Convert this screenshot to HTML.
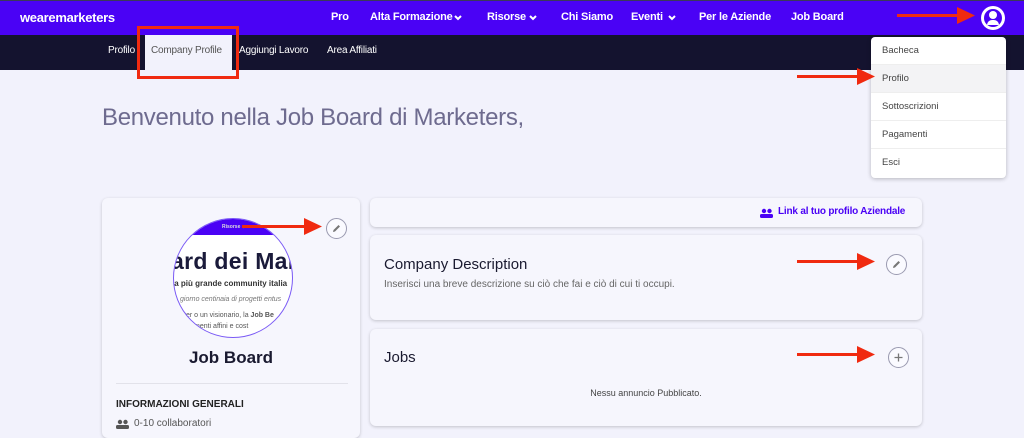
<!DOCTYPE html>
<html><head><meta charset="utf-8"><style>
*{box-sizing:border-box;margin:0;padding:0}
body{width:1024px;height:431px;overflow:hidden;background:#f2f2fc;font-family:"Liberation Sans",sans-serif;position:relative}
.a{position:absolute}
.top{left:0;top:0;width:1024px;height:35px;background:#4a02f5;border-top:1px solid #3a3a5a}
.sub{left:0;top:35px;width:1024px;height:35px;background:#14132f}
.nav{color:#fff;font-weight:bold;font-size:11px;letter-spacing:-0.2px;top:11px;white-space:nowrap}
.subt{color:#fff;font-size:10px;top:45px;letter-spacing:-0.2px;white-space:nowrap}
.card{background:#f6f6fd;border-radius:6px;box-shadow:0 1px 3px rgba(0,0,0,.2)}
.btn{width:21px;height:21px;border:1px solid #9a9ab0;border-radius:50%;background:#fafaff}
.dd{left:871px;top:37px;width:135px;height:141px;background:#fff;border-radius:4px;box-shadow:0 1px 4px rgba(0,0,0,.25)}
.di{position:absolute;left:0;width:135px;height:28px;font-size:9.5px;color:#444;padding-left:11px;line-height:27px;border-bottom:1px solid #eee}
</style></head><body>
<svg width="0" height="0" style="position:absolute"><defs>
<g id="chev"><path d="M1 1 L4 4 L7 1" fill="none" stroke="#fff" stroke-width="2"/></g>
</defs></svg>
<div class="a top"></div>
<div class="a sub"></div>
<div class="a nav" style="left:20px;top:10px;font-size:13px;letter-spacing:-0.3px">wearemarketers</div>
<div class="a nav" style="left:331px">Pro</div>
<div class="a nav" style="left:370px">Alta Formazione</div>
<svg class="a" style="left:454px;top:15px" width="8" height="6"><use href="#chev"/></svg>
<div class="a nav" style="left:487px">Risorse</div>
<svg class="a" style="left:529px;top:15px" width="8" height="6"><use href="#chev"/></svg>
<div class="a nav" style="left:561px">Chi Siamo</div>
<div class="a nav" style="left:631px">Eventi</div>
<svg class="a" style="left:668px;top:15px" width="8" height="6"><use href="#chev"/></svg>
<div class="a nav" style="left:699px">Per le Aziende</div>
<div class="a nav" style="left:791px">Job Board</div>
<div class="a" style="left:981px;top:6px;width:24px;height:24px;border-radius:50%;background:#fff"><div class="a" style="left:3px;top:3px;width:18px;height:18px;border-radius:50%;background:#4a02f5"></div><div class="a" style="left:8px;top:5px;width:8px;height:8px;border-radius:50%;background:#fff"></div><div class="a" style="left:6px;top:14px;width:12px;height:5px;border-radius:5px 5px 0 0;background:#fff"></div></div>
<svg class="a" style="left:897px;top:7px" width="80" height="18"><rect x="0" y="7" width="64" height="3" fill="#f02a10"/><path d="M60 0 L78 8.5 L60 17Z" fill="#f02a10"/></svg>

<div class="a subt" style="left:108px">Profilo</div>
<div class="a" style="left:145px;top:35px;width:87px;height:35px;background:#f2f2fc"></div>
<div class="a subt" style="left:151px;color:#555">Company Profile</div>
<div class="a subt" style="left:239px">Aggiungi Lavoro</div>
<div class="a subt" style="left:327px">Area Affiliati</div>
<div class="a" style="left:137px;top:26px;width:102px;height:53px;border:3px solid #f02a10"></div>

<div class="a" style="left:102px;top:104px;font-size:24px;color:#6e6b8f;letter-spacing:-.3px">Benvenuto nella Job Board di Marketers,</div>

<div class="a card" style="left:102px;top:198px;width:258px;height:240px"></div>
<div class="a" style="left:173px;top:218px;width:120px;height:120px;border-radius:50%;border:1.5px solid #7a5af5;background:#fff;overflow:hidden">
 <div class="a" style="left:0;top:0;width:120px;height:16px;background:#4a02f5;color:#ddd;font-size:5px;font-weight:bold;text-align:center;line-height:16px">Risorse ⌄</div>
 <div class="a" style="left:-3px;top:29px;font-size:23px;font-weight:bold;color:#1a1a3a;white-space:nowrap;letter-spacing:0.3px">ard dei Mark</div>
 <div class="a" style="left:-2px;top:60px;font-size:8px;font-weight:bold;color:#333;white-space:nowrap">la più grande community italia</div>
 <div class="a" style="left:6px;top:77px;font-size:7px;font-style:italic;color:#777;white-space:nowrap">giorno centinaia di progetti entus</div>
 <div class="a" style="left:10px;top:93px;font-size:7px;color:#555;white-space:nowrap">ter o un visionario, la <b>Job Be</b></div>
 <div class="a" style="left:20px;top:104px;font-size:7px;color:#555;white-space:nowrap">menti affini e cost</div>
</div>
<svg class="a" style="left:242px;top:218px" width="80" height="18"><rect x="0" y="7" width="64" height="3" fill="#f02a10"/><path d="M62 0 L80 8.5 L62 17Z" fill="#f02a10"/></svg>
<div class="a btn" style="left:326px;top:218px"><svg width="19" height="19"><path d="M6 13 L6.5 11 L11.5 6 L13 7.5 L8 12.5Z" fill="#777"/></svg></div>
<div class="a" style="left:102px;top:348px;width:258px;text-align:center;font-size:17px;font-weight:bold;color:#1a1a30">Job Board</div>
<div class="a" style="left:116px;top:383px;width:232px;height:1px;background:#e2e2ea"></div>
<div class="a" style="left:116px;top:399px;font-size:10px;font-weight:bold;color:#222">INFORMAZIONI GENERALI</div>
<svg class="a" style="left:116px;top:419px" width="13" height="10"><circle cx="4" cy="3" r="2.2" fill="#555"/><circle cx="9.5" cy="3" r="2.2" fill="#555"/><rect x="0" y="6" width="13" height="4" rx="1.5" fill="#555"/></svg>
<div class="a" style="left:134px;top:418px;font-size:10px;color:#555">0-10 collaboratori</div>

<div class="a card" style="left:370px;top:198px;width:552px;height:29px"></div>
<svg class="a" style="left:760px;top:208px" width="13" height="10"><circle cx="4" cy="3" r="2.2" fill="#4a02f5"/><circle cx="9.5" cy="3" r="2.2" fill="#4a02f5"/><rect x="0" y="6" width="13" height="4" rx="1.5" fill="#4a02f5"/></svg>
<div class="a" style="left:778px;top:206px;font-size:10px;font-weight:bold;color:#4a02f5;letter-spacing:-0.2px">Link al tuo profilo Aziendale</div>

<div class="a card" style="left:370px;top:235px;width:552px;height:85px"></div>
<div class="a" style="left:384px;top:256px;font-size:15px;color:#1a1a30">Company Description</div>
<div class="a" style="left:384px;top:279px;font-size:10px;color:#666">Inserisci una breve descrizione su ciò che fai e ciò di cui ti occupi.</div>
<svg class="a" style="left:797px;top:253px" width="80" height="18"><rect x="0" y="7" width="62" height="3" fill="#f02a10"/><path d="M60 0 L78 8.5 L60 17Z" fill="#f02a10"/></svg>
<div class="a btn" style="left:886px;top:254px"><svg width="19" height="19"><path d="M6 13 L6.5 11 L11.5 6 L13 7.5 L8 12.5Z" fill="#777"/></svg></div>

<div class="a card" style="left:370px;top:329px;width:552px;height:97px"></div>
<div class="a" style="left:384px;top:349px;font-size:15px;color:#1a1a30">Jobs</div>
<svg class="a" style="left:797px;top:346px" width="80" height="18"><rect x="0" y="7" width="62" height="3" fill="#f02a10"/><path d="M60 0 L78 8.5 L60 17Z" fill="#f02a10"/></svg>
<div class="a btn" style="left:888px;top:347px"><svg width="19" height="19"><path d="M9.5 5.5 V13.5 M5.5 9.5 H13.5" stroke="#777" stroke-width="1.3"/></svg></div>
<div class="a" style="left:370px;top:388px;width:552px;text-align:center;font-size:9px;color:#444">Nessu annuncio Pubblicato.</div>

<div class="a dd">
 <div class="di" style="top:0">Bacheca</div>
 <div class="di" style="top:28px;background:#f3f3f5">Profilo</div>
 <div class="di" style="top:56px">Sottoscrizioni</div>
 <div class="di" style="top:84px">Pagamenti</div>
 <div class="di" style="top:112px;border:0">Esci</div>
</div>
<svg class="a" style="left:797px;top:68px" width="80" height="18"><rect x="0" y="7" width="62" height="3" fill="#f02a10"/><path d="M60 0 L78 8.5 L60 17Z" fill="#f02a10"/></svg>
</body></html>
